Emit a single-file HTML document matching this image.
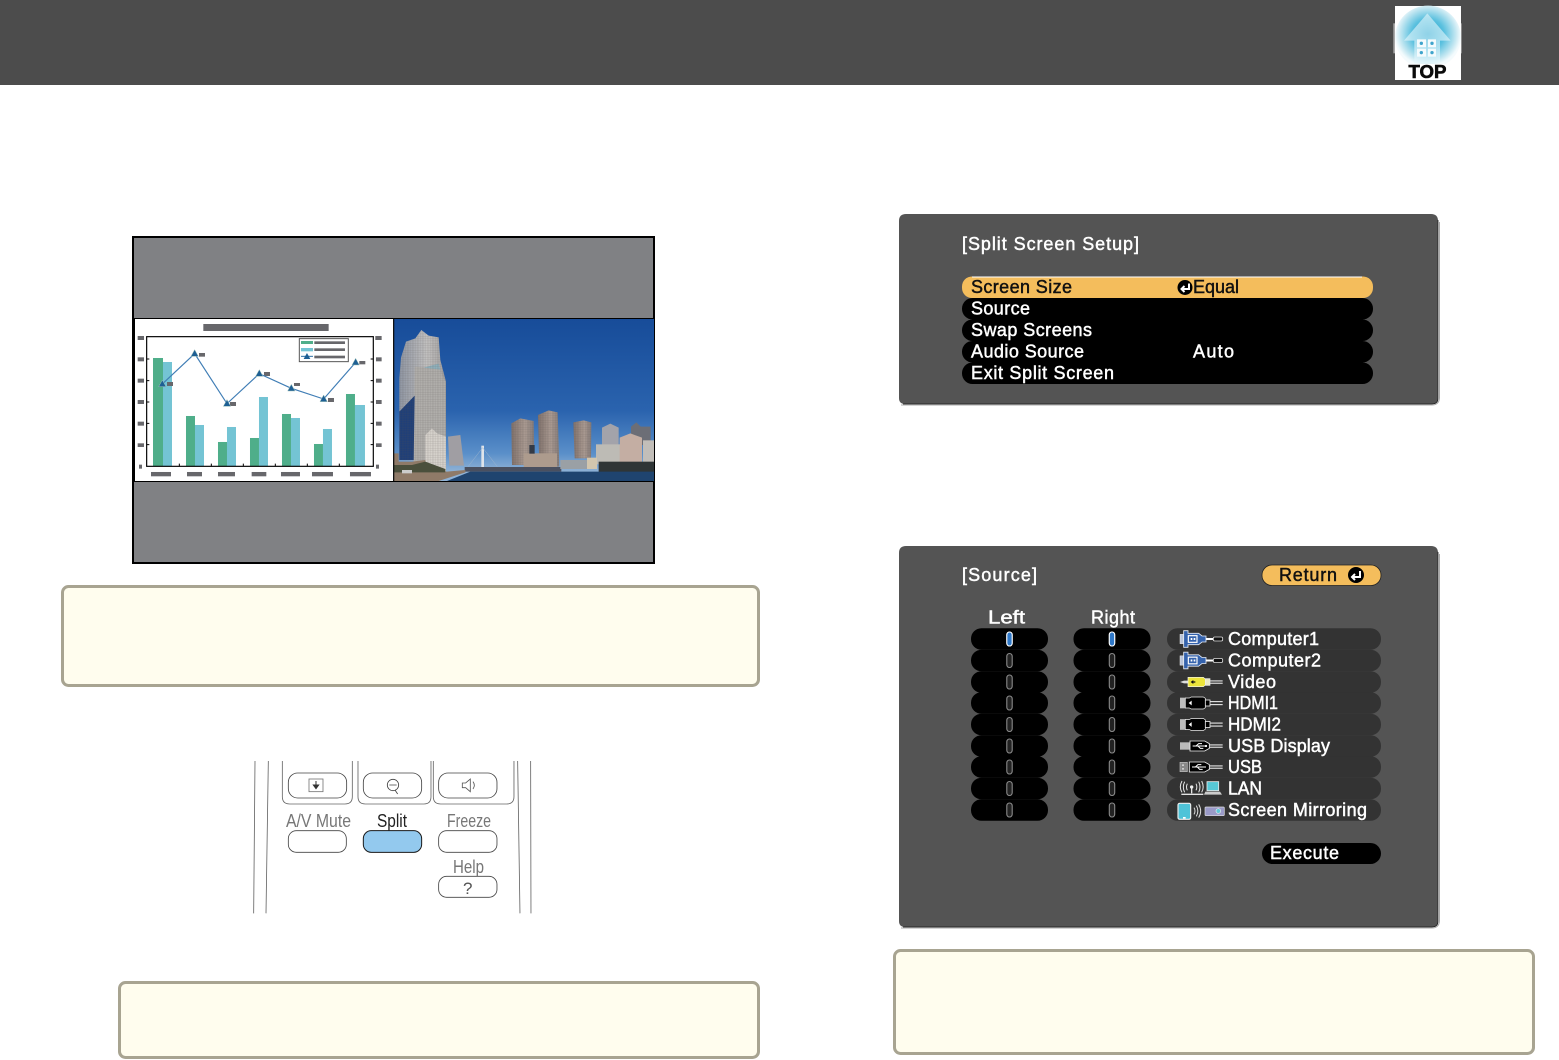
<!DOCTYPE html>
<html lang="en"><head><meta charset="utf-8"><title>Split Screen</title>
<style>html,body{margin:0;padding:0;background:#fff}svg{display:block}
.m{font-family:"Liberation Sans",sans-serif;font-size:18px;fill:#fff;stroke:#fff;stroke-width:.45px}
.k{fill:#111;stroke:#111}
.r{font-family:"Liberation Sans",sans-serif;font-size:18px;fill:#777}
</style></head><body>
<svg xmlns="http://www.w3.org/2000/svg" width="1559" height="1060" viewBox="0 0 1559 1060">
<defs>
<radialGradient id="tg" cx=".5" cy=".45" r=".5"><stop offset="0" stop-color="#0f9cc9"/><stop offset=".5" stop-color="#5cc1df"/><stop offset=".85" stop-color="#c6e8f2"/><stop offset="1" stop-color="#f4fbfd"/></radialGradient>
<linearGradient id="sky" gradientUnits="userSpaceOnUse" x1="0" y1="12" x2="0" y2="470"><stop offset="0" stop-color="#174c99"/><stop offset=".6" stop-color="#2a63ae"/><stop offset=".88" stop-color="#5a8fc9"/><stop offset="1" stop-color="#8fb2d6"/></linearGradient>
<linearGradient id="tw" x1="0" y1="0" x2="1" y2="0"><stop offset="0" stop-color="#8f96a3"/><stop offset=".6" stop-color="#c2c1c0"/><stop offset="1" stop-color="#a09e9e"/></linearGradient>
<linearGradient id="bb" x1="0" y1="0" x2="1" y2="0"><stop offset="0" stop-color="#80716b"/><stop offset=".6" stop-color="#ab9b92"/><stop offset="1" stop-color="#857b78"/></linearGradient>
<pattern id="win" width="5" height="7" patternUnits="userSpaceOnUse"><path d="M0 0H5M0 0V7" stroke="#55504e" stroke-width="1.3" opacity=".4"/></pattern>
<g id="sel"><rect x="-38.5" y="-10.8" width="77" height="21.6" rx="10.5" fill="#000"/><rect x="-2.7" y="-7" width="5.4" height="14" rx="2.7" fill="#222" stroke="#8a8a8a" stroke-width="1.1"/></g>
<g id="src"><rect x="1167" y="-10.8" width="214" height="21.6" rx="10.5" fill="#333"/></g>
<g id="vga" transform="scale(.3333)">
<rect x="0" y="-14" width="11" height="28" fill="#b9c4d8" stroke="#eee" stroke-width="1.5"/>
<path d="M11-25H24V-17H56L66-9H78V9H66L56 17H24V25H11Z" fill="#3563ad" stroke="#e6ebf3" stroke-width="2.5"/>
<rect x="25" y="-10" width="26" height="20" fill="none" stroke="#fff" stroke-width="3.5"/><rect x="32" y="-3" width="5" height="6" fill="#fff"/><rect x="41" y="-3" width="5" height="6" fill="#fff"/>
<path d="M78-3H100V3H78Z" fill="#fff"/><rect x="100" y="-6" width="28" height="12" rx="4" fill="#111" stroke="#ddd" stroke-width="2.5"/>
</g>
<g id="hdmi" transform="scale(.3333)">
<rect x="0" y="-16" width="17" height="32" fill="#bdbdbd"/>
<path d="M16-15H28L34-18H70L76-14V14L70 18H34L28 15H16Z" fill="#000" stroke="#eee" stroke-width="2"/>
<path d="M35-7L26 0L35 7Z" fill="#fff"/>
<rect x="76" y="-9" width="14" height="18" fill="#000" stroke="#eee" stroke-width="2.5"/>
<rect x="90" y="-6" width="38" height="3.5" fill="#ddd"/><rect x="90" y="3" width="38" height="3.5" fill="#ddd"/>
</g>
<g id="usb" transform="scale(.3333)">
<rect x="0" y="-11" width="30" height="22" fill="#bbb"/>
<path d="M30-15H74L88-7V7L74 15H30Z" fill="#000" stroke="#eee" stroke-width="2.5"/>
<path d="M38 0H78M48 0L56-7H66M54 0L61 7H70" stroke="#fff" stroke-width="3" fill="none"/><circle cx="78" cy="0" r="3.5" fill="#fff"/>
<rect x="88" y="-5" width="40" height="3.5" fill="#ddd"/><rect x="88" y="2" width="40" height="3.5" fill="#ddd"/>
</g>
</defs>

<rect width="1559" height="1060" fill="#fff"/>
<rect width="1559" height="85" fill="#4c4c4c"/>

<!-- TOP icon -->
<g transform="translate(1380,0) scale(.3333)">
<rect x="40" y="70" width="5" height="90" fill="#a9a9a9"/>
<rect x="243" y="70" width="3" height="90" fill="#8a8a8a"/>
<rect x="45" y="18" width="198" height="222" fill="#fff"/>
<path d="M45 112A98 94 0 0 1 243 112A98 94 0 0 1 45 112Z" fill="url(#tg)"/>
<path d="M142 40L212 122H180V190H103V122H72Z" fill="#e6f6fb" opacity=".6"/>
<g fill="#f4fbfd"><rect x="111" y="118" width="27" height="24"/><rect x="144" y="118" width="24" height="24"/><rect x="111" y="146" width="27" height="24"/><rect x="144" y="146" width="24" height="24"/></g>
<g fill="#3fa4cc"><circle cx="124" cy="130" r="5"/><circle cx="156" cy="130" r="5"/><circle cx="124" cy="158" r="5"/><circle cx="156" cy="158" r="5"/></g>
<rect x="45" y="192" width="198" height="48" fill="#fff"/>
</g>
<text x="1408.5" y="78" font-family="Liberation Sans,sans-serif" font-weight="700" font-size="18" fill="#0a0a0a" stroke="#0a0a0a" stroke-width=".6" textLength="38" lengthAdjust="spacingAndGlyphs">TOP</text>

<!-- Projected screen -->
<rect x="133" y="237" width="521" height="326" fill="#808184" stroke="#000" stroke-width="2"/>
<rect x="134" y="318" width="520" height="164" fill="#000"/>
<rect x="135" y="319" width="258" height="162" fill="#fff"/>

<g transform="translate(130,315) scale(.3333)">
<rect x="220" y="27" width="376" height="21" fill="#67676b"/>
<g fill="#4fae8a"><rect x="69" y="129" width="30" height="324"/><rect x="168" y="303" width="27" height="150"/><rect x="264" y="381" width="27" height="72"/><rect x="360" y="369" width="27" height="84"/><rect x="456" y="297" width="27" height="156"/><rect x="552" y="387" width="27" height="66"/><rect x="648" y="237" width="27" height="216"/></g>
<g fill="#74c4d4"><rect x="99" y="141" width="27" height="312"/><rect x="195" y="330" width="27" height="123"/><rect x="291" y="336" width="27" height="117"/><rect x="387" y="246" width="27" height="207"/><rect x="483" y="309" width="27" height="144"/><rect x="579" y="342" width="27" height="111"/><rect x="675" y="270" width="30" height="183"/></g>
<rect x="50" y="65" width="680" height="389" fill="none" stroke="#000" stroke-width="3.5"/>
<g stroke="#000" stroke-width="3"><path d="M148 446v8M244 446v8M340 446v8M436 446v8M532 446v8M628 446v8"/><path d="M50 132h8M50 197h8M50 261h8M50 325h8M50 389h8M722 132h8M722 197h8M722 261h8M722 325h8M722 389h8"/></g>
<g fill="#67676b">
<rect x="23" y="63" width="19" height="12"/><rect x="23" y="127" width="19" height="12"/><rect x="23" y="191" width="19" height="12"/><rect x="23" y="255" width="19" height="12"/><rect x="23" y="320" width="19" height="12"/><rect x="23" y="385" width="19" height="11"/><rect x="27" y="449" width="9" height="12"/>
<rect x="736" y="63" width="19" height="12"/><rect x="738" y="127" width="17" height="12"/><rect x="738" y="191" width="17" height="12"/><rect x="738" y="255" width="17" height="12"/><rect x="738" y="320" width="17" height="12"/><rect x="738" y="385" width="17" height="11"/><rect x="738" y="449" width="9" height="12"/>
<rect x="63" y="471" width="60" height="13"/><rect x="171" y="471" width="45" height="13"/><rect x="264" y="471" width="51" height="13"/><rect x="365" y="471" width="44" height="13"/><rect x="453" y="471" width="57" height="13"/><rect x="546" y="471" width="63" height="13"/><rect x="660" y="471" width="63" height="13"/>
<rect x="111" y="201" width="18" height="12"/><rect x="207" y="114" width="18" height="11"/><rect x="300" y="261" width="18" height="12"/><rect x="402" y="171" width="18" height="12"/><rect x="492" y="204" width="18" height="9"/><rect x="594" y="249" width="18" height="12"/><rect x="688" y="138" width="18" height="10"/>
</g>
<path d="M97 207L194 116L291 266L388 176L484 220L581 252L677 142" fill="none" stroke="#3f7db5" stroke-width="3.5"/>
<g fill="#1d5f94" stroke="#9fc0b8" stroke-width="1.5"><path d="M97 195l11 20H86z"/><path d="M194 104l11 20h-22z"/><path d="M291 254l11 20h-22z"/><path d="M388 164l11 20h-22z"/><path d="M484 208l11 20h-22z"/><path d="M581 240l11 20h-22z"/><path d="M677 130l11 20h-22z"/></g>
<rect x="508" y="71" width="147" height="69" fill="#fff" stroke="#555" stroke-width="3"/>
<rect x="513" y="78" width="36" height="9" fill="#4fae8a"/><rect x="513" y="99" width="36" height="10" fill="#74c4d4"/>
<path d="M513 124h36" stroke="#2a6ea5" stroke-width="3"/><path d="M531 114l10 18h-20z" fill="#1d5f94"/>
<g fill="#67676b"><rect x="553" y="79" width="92" height="8"/><rect x="553" y="100" width="92" height="8"/><rect x="553" y="122" width="92" height="8"/></g>
</g>

<!-- Photo -->
<svg x="394" y="319" width="260" height="162" viewBox="6 12 780 486" preserveAspectRatio="none">
<rect x="0" y="0" width="790" height="500" fill="url(#sky)"/>
<path d="M22 435V190L27 128L42 80L70 70L88 45L110 62L140 67L145 135L162 200V440Z" fill="url(#tw)"/>
<path d="M68 155L140 160L160 200V440H65Z" fill="#b0aeab"/>
<path d="M22 435V290L68 242L65 435Z" fill="#1f3f78"/>
<path d="M95 158l45-12 5 18z" fill="#8fb0bb"/>
<path d="M22 435V190L27 128L42 80L70 70L88 45L110 62L140 67L145 135L162 200V440Z" fill="url(#win)"/>
<path d="M100 360L120 340L135 355L162 365V475H100Z" fill="#d6d2cc"/>
<path d="M100 360L120 340L135 355L162 365V475H100Z" fill="url(#win)"/>
<path d="M168 365L205 360L216 452H172Z" fill="#a09ea3"/>
<path d="M358 325L385 310L425 318L427 450H360Z" fill="url(#bb)"/>
<path d="M438 300L470 286L497 292L502 455H442Z" fill="url(#bb)"/>
<path d="M544 322L575 316L598 322L597 430H548Z" fill="url(#bb)"/>
<path d="M358 325L385 310L425 318L427 450H360ZM438 300L470 286L497 292L502 455H442ZM544 322L575 316L598 322L597 430H548Z" fill="url(#win)"/>
<path d="M630 338L655 326L680 338V395H630Z" fill="#a3a3aa"/>
<path d="M717 335L733 322L746 335H776V390H717Z" fill="#6c6e76"/>
<rect x="395" y="415" width="100" height="42" fill="#ad9b8d"/>
<rect x="612" y="388" width="75" height="60" fill="#bdbbb5"/>
<path d="M683 368L715 355L750 368V450H683Z" fill="#c4aea3"/>
<rect x="753" y="376" width="33" height="80" fill="#c2beb9"/>
<rect x="585" y="428" width="30" height="34" fill="#d2c6ae"/>
<rect x="412" y="390" width="16" height="26" fill="#333a46"/>
<path d="M268 392h8v68h-8z" fill="#dfe4ea"/><path d="M272 398L228 455M272 398L316 455" stroke="#9cb4cd" stroke-width="1.5"/>
<rect x="218" y="456" width="290" height="14" fill="#4a5060"/>
<rect x="505" y="435" width="80" height="27" fill="#9aa0a5"/>
<rect x="620" y="440" width="166" height="32" fill="#2f3536"/>
<path d="M6 415H20V440H60L100 435V465L165 470L220 465V472L140 498H6Z" fill="#8f7a68"/>
<path d="M6 450H60L100 440L160 462V472H6Z" fill="#4a4f3c"/>
<rect x="30" y="465" width="30" height="10" fill="#ccc"/>
<path d="M165 498L235 470H786V498Z" fill="#1f446f"/>
</svg>
<rect x="393" y="319" width="1.3" height="162" fill="#111"/>

<!-- Note boxes -->
<rect x="62.5" y="586.5" width="696" height="99" rx="6" fill="#fffdee" stroke="#a8a491" stroke-width="3"/>
<rect x="119.5" y="982.5" width="639" height="75" rx="6" fill="#fffdee" stroke="#a8a491" stroke-width="3"/>
<rect x="894.5" y="950.5" width="639" height="103" rx="6" fill="#fffdee" stroke="#a8a491" stroke-width="3"/>

<!-- Remote -->
<g transform="translate(245,755) scale(.3333)" fill="none" stroke="#666" stroke-width="2.5">
<path d="M30 18L26 475M70 18L63 475M818 18L825 475M857 18L858 475"/>
<path d="M112 18V125Q112 147 134 147H300Q322 147 322 125V18"/>
<path d="M339 18V125Q339 147 361 147H537Q558 147 558 125V18"/>
<path d="M565 18V125Q565 147 587 147H785Q807 147 807 125V18"/>
<rect x="130" y="54" width="175" height="75" rx="28" stroke="#444"/>
<rect x="355" y="54" width="175" height="75" rx="28" stroke="#444"/>
<rect x="581" y="54" width="175" height="75" rx="28" stroke="#444"/>
<rect x="192" y="72" width="42" height="38" stroke="#777"/>
<path d="M213 78V94M205 90H221L213 101Z" fill="#333" stroke="#333" stroke-width="3"/>
<circle cx="444" cy="90" r="17" stroke="#444"/><path d="M433 90H455M450 105L458 117" stroke="#444"/>
<path d="M652 84H662L676 72V110L662 98H652ZM684 80Q692 91 684 102" stroke="#555"/>
<rect x="130" y="227" width="174" height="65" rx="24" stroke="#444"/>
<rect x="355" y="227" width="175" height="65" rx="24" fill="#93c9ee" stroke="#1a1a1a" stroke-width="3"/>
<rect x="581" y="227" width="175" height="65" rx="24" stroke="#444"/>
<rect x="581" y="364" width="175" height="63" rx="24" stroke="#444"/>
</g>
<text class="r" x="286" y="827" textLength="65" lengthAdjust="spacingAndGlyphs">A/V Mute</text>
<text class="r" x="377" y="827" textLength="30" lengthAdjust="spacingAndGlyphs" style="fill:#222">Split</text>
<text class="r" x="447" y="827" textLength="44" lengthAdjust="spacingAndGlyphs">Freeze</text>
<text class="r" x="453" y="873" textLength="31" lengthAdjust="spacingAndGlyphs">Help</text>
<text class="r" x="463" y="894" style="fill:#555;font-size:17px">?</text>

<!-- Split Screen Setup panel -->
<path d="M906 214H1431Q1438 214 1438 221V398Q1438 404 1432 404H905Q899 404 899 398V221Q899 214 906 214Z" fill="#545454"/>
<path d="M1438 220V398Q1438 404 1432 404H903" fill="none" stroke="#1d1d1d" stroke-width=".8"/>
<path d="M901 405H1432Q1439 405 1439.5 398V222" fill="none" stroke="#aaa" stroke-width="1"/>
<text class="m" x="962" y="250" textLength="177">[Split Screen Setup]</text>
<rect x="962" y="276.5" width="411" height="21.5" rx="10" fill="#f4bd5c"/>
<path d="M972 277H1362" stroke="#fff" stroke-width="1"/>
<rect x="962" y="298" width="411" height="21.5" rx="10.5" fill="#000"/>
<rect x="962" y="319.5" width="411" height="21.5" rx="10.5" fill="#000"/>
<rect x="962" y="341" width="411" height="21.5" rx="10.5" fill="#000"/>
<rect x="962" y="362.5" width="411" height="21.5" rx="10.5" fill="#000"/>
<text class="m k" x="971" y="293" textLength="101">Screen Size</text>
<circle cx="1185" cy="287.5" r="7.5" fill="#000"/><path d="M1189 283.5V289H1182M1184.5 286L1181.5 289L1184.5 292" fill="none" stroke="#fff" stroke-width="2"/>
<text class="m k" x="1193" y="293" textLength="46">Equal</text>
<text class="m" x="971" y="314.5" textLength="59">Source</text>
<text class="m" x="971" y="336" textLength="121">Swap Screens</text>
<text class="m" x="971" y="357.5" textLength="113">Audio Source</text>
<text class="m" x="1193" y="357.5" textLength="41">Auto</text>
<text class="m" x="971" y="379" textLength="143">Exit Split Screen</text>

<!-- Source panel -->
<path d="M906 546H1431Q1438 546 1438 553V921Q1438 927 1432 927H905Q899 927 899 921V553Q899 546 906 546Z" fill="#545454"/>
<path d="M1438 552V921Q1438 927 1432 927H903" fill="none" stroke="#1d1d1d" stroke-width=".8"/>
<path d="M901 928H1432Q1439 928 1439.5 921V554" fill="none" stroke="#aaa" stroke-width="1"/>
<text class="m" x="962" y="581" textLength="75">[Source]</text>
<rect x="1262" y="565" width="119" height="20.5" rx="10" fill="#f4bd5c" stroke="#222" stroke-width=".8"/>
<text class="m k" x="1279" y="581" textLength="58">Return</text>
<circle cx="1356" cy="575" r="8" fill="#000"/><path d="M1360 571V577H1352M1355 574L1352 577L1355 580" fill="none" stroke="#fff" stroke-width="2"/>
<text class="m" x="988" y="623.5" textLength="37" lengthAdjust="spacingAndGlyphs">Left</text>
<text class="m" x="1091" y="623.5" textLength="44">Right</text>

<g>
<use href="#sel" x="1009.5" y="639"/><use href="#sel" x="1009.5" y="660.5"/><use href="#sel" x="1009.5" y="682"/><use href="#sel" x="1009.5" y="703"/><use href="#sel" x="1009.5" y="724.5"/><use href="#sel" x="1009.5" y="746"/><use href="#sel" x="1009.5" y="767"/><use href="#sel" x="1009.5" y="788.5"/><use href="#sel" x="1009.5" y="810"/>
<use href="#sel" x="1112" y="639"/><use href="#sel" x="1112" y="660.5"/><use href="#sel" x="1112" y="682"/><use href="#sel" x="1112" y="703"/><use href="#sel" x="1112" y="724.5"/><use href="#sel" x="1112" y="746"/><use href="#sel" x="1112" y="767"/><use href="#sel" x="1112" y="788.5"/><use href="#sel" x="1112" y="810"/>
<rect x="1006.8" y="632" width="5.4" height="14" rx="2.7" fill="#2f78c8" stroke="#fff" stroke-width="1.1"/>
<rect x="1109.3" y="632" width="5.4" height="14" rx="2.7" fill="#2f78c8" stroke="#fff" stroke-width="1.1"/>
<use href="#src" y="639"/><use href="#src" y="660.5"/><use href="#src" y="682"/><use href="#src" y="703"/><use href="#src" y="724.5"/><use href="#src" y="746"/><use href="#src" y="767"/><use href="#src" y="788.5"/><use href="#src" y="810"/>
</g>

<use href="#vga" x="1180" y="639"/>
<use href="#vga" x="1180" y="660.5"/>
<!-- video -->
<g transform="translate(1180,682) scale(.3333)">
<path d="M0 0L12-4H24V4H12Z" fill="#ddd"/><path d="M24-14H70L76-9V9L70 14H24Z" fill="#ece43a" stroke="#f2f2f2" stroke-width="2"/><path d="M32 0l8-6v4h6v4h-6v4z" fill="#111"/><rect x="76" y="-10" width="14" height="20" fill="#e9e9c6" stroke="#eee" stroke-width="2"/><rect x="90" y="-5" width="38" height="3.5" fill="#ddd"/><rect x="90" y="2" width="38" height="3.5" fill="#ddd"/>
</g>
<use href="#hdmi" x="1180" y="703"/>
<use href="#hdmi" x="1180" y="724.5"/>
<use href="#usb" x="1180" y="746"/>
<g transform="translate(1180,767) scale(.3333)">
<rect x="0" y="-14" width="22" height="28" fill="#888" stroke="#bbb" stroke-width="2"/><rect x="7" y="-8" width="4" height="5" fill="#eee"/><rect x="7" y="3" width="4" height="5" fill="#eee"/>
<path d="M28-15H74L88-7V7L74 15H28Z" fill="#000" stroke="#eee" stroke-width="2.5"/><path d="M36 0H78M46 0L54-7H64M52 0L59 7H68" stroke="#fff" stroke-width="3" fill="none"/><rect x="88" y="-5" width="40" height="3.5" fill="#ddd"/><rect x="88" y="2" width="40" height="3.5" fill="#ddd"/>
</g>
<!-- LAN -->
<g transform="translate(1170,775) scale(.3333)" fill="none" stroke="#e4e4e4" stroke-width="3.5">
<path d="M65 38V55M34 58H100" stroke-width="4"/><circle cx="65" cy="36" r="5" fill="#eee" stroke="none"/>
<path d="M52 26Q47 36 52 46M78 26Q83 36 78 46M44 20Q36 36 44 52M86 20Q94 36 86 52M36 18Q26 36 36 52M95 18Q104 36 95 52" stroke-width="3"/>
<rect x="111" y="20" width="35" height="27" fill="#57c8d6" stroke="#e8e8e8" stroke-width="2.5"/><path d="M106 50H150L156 59H102Z" fill="#ccc" stroke="none"/>
</g>
<!-- Screen Mirroring -->
<g transform="translate(1170,775) scale(.3333)">
<rect x="24" y="85" width="38" height="48" rx="5" fill="#4fc3d8" stroke="#eee" stroke-width="3.5"/><rect x="39" y="126" width="8" height="5" fill="#fff"/>
<path d="M72 98Q78 108 72 118M79 92Q88 108 79 124M86 88Q98 108 86 128" fill="none" stroke="#ddd" stroke-width="3"/>
<rect x="105" y="96" width="58" height="26" rx="3" fill="#9a9ac8" stroke="#ddd" stroke-width="2"/><circle cx="145" cy="108" r="7" fill="#5fc6d8" stroke="#eee" stroke-width="2"/>
</g>

<text class="m" x="1228" y="645" textLength="91">Computer1</text>
<text class="m" x="1228" y="666.5" textLength="93">Computer2</text>
<text class="m" x="1228" y="688" textLength="48">Video</text>
<text class="m" x="1228" y="709" textLength="50" lengthAdjust="spacingAndGlyphs">HDMI1</text>
<text class="m" x="1228" y="730.5" textLength="53" lengthAdjust="spacingAndGlyphs">HDMI2</text>
<text class="m" x="1228" y="752" textLength="102">USB Display</text>
<text class="m" x="1228" y="773" textLength="34" lengthAdjust="spacingAndGlyphs">USB</text>
<text class="m" x="1228" y="794.5" textLength="34" lengthAdjust="spacingAndGlyphs">LAN</text>
<text class="m" x="1228" y="816" textLength="139">Screen Mirroring</text>
<rect x="1262" y="843" width="119" height="21" rx="10.5" fill="#000"/>
<text class="m" x="1270" y="859" textLength="69">Execute</text>
</svg>
</body></html>
